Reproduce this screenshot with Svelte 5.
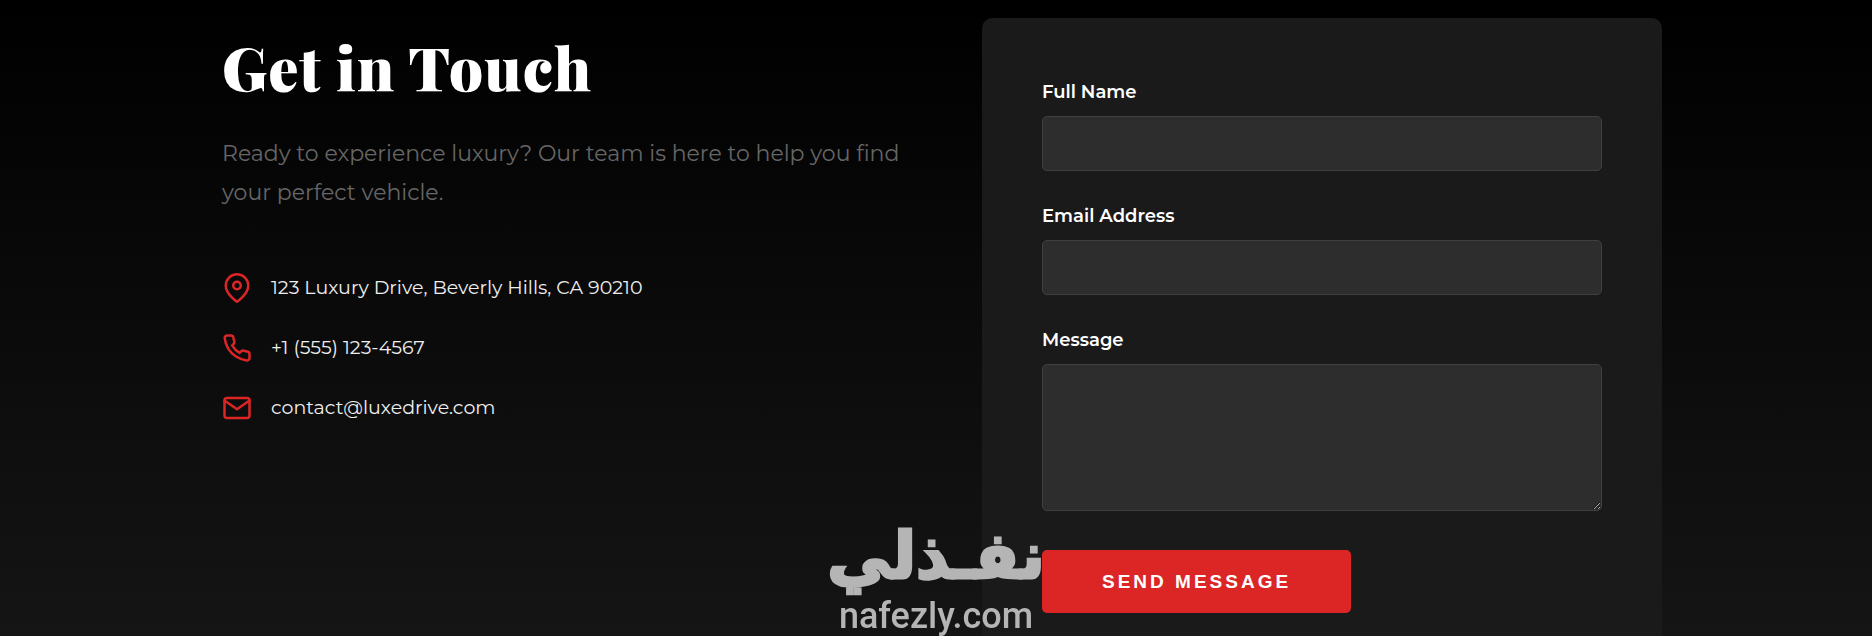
<script>
    let name = $state("");
    let email = $state("");
    let message = $state("");

    function send(ev) {
        ev.preventDefault();
        name = "";
        email = "";
        message = "";
    }
</script>

<section class="contact">
    <div class="container">
        <div class="info">
            <h2>Get in Touch</h2>
            <p class="lead">Ready to experience luxury? Our team is here to help you find your perfect vehicle.</p>
            <ul>
                <li>
                    <svg viewBox="0 0 24 24" aria-hidden="true">
                        <path d="M21 10c0 7-9 13-9 13s-9-6-9-13a9 9 0 0 1 18 0z" />
                        <circle cx="12" cy="10" r="3" />
                    </svg>
                    <span>123 Luxury Drive, Beverly Hills, CA 90210</span>
                </li>
                <li>
                    <svg viewBox="0 0 24 24" aria-hidden="true">
                        <path
                            d="M22 16.92v3a2 2 0 0 1-2.18 2 19.79 19.79 0 0 1-8.63-3.07 19.5 19.5 0 0 1-6-6 19.79 19.79 0 0 1-3.07-8.67A2 2 0 0 1 4.11 2h3a2 2 0 0 1 2 1.72 12.84 12.84 0 0 0 .7 2.81 2 2 0 0 1-.45 2.11L8.09 9.91a16 16 0 0 0 6 6l1.27-1.27a2 2 0 0 1 2.11-.45 12.84 12.84 0 0 0 2.81.7A2 2 0 0 1 22 16.92z"
                        />
                    </svg>
                    <span>+1 (555) 123-4567</span>
                </li>
                <li>
                    <svg viewBox="0 0 24 24" aria-hidden="true">
                        <path d="M4 4h16c1.1 0 2 .9 2 2v12c0 1.1-.9 2-2 2H4c-1.1 0-2-.9-2-2V6c0-1.1.9-2 2-2z" />
                        <polyline points="22,6 12,13 2,6" />
                    </svg>
                    <span>contact@luxedrive.com</span>
                </li>
            </ul>
        </div>

        <form onsubmit={send}>
            <div class="field">
                <label for="name">Full Name</label>
                <input id="name" type="text" bind:value={name} />
            </div>
            <div class="field">
                <label for="email">Email Address</label>
                <input id="email" type="email" bind:value={email} />
            </div>
            <div class="field">
                <label for="message">Message</label>
                <textarea id="message" bind:value={message}></textarea>
            </div>
            <button type="submit">Send Message</button>
        </form>
    </div>
</section>

<div class="watermark">
    <span class="watermark-ar" lang="ar" dir="rtl">نفـذلي</span>
    <span class="watermark-en">nafezly.com</span>
</div>

<style>
    :global(body) {
        margin: 0;
        background: #1a1a1a;
    }
    .contact {
        box-sizing: border-box;
        min-height: 100vh;
        padding: 18px 0 120px 12px;
        background: linear-gradient(#000, #1a1a1a);
        color: #fff;
        font-family: Montserrat, Inter, sans-serif;
    }
    .container {
        display: grid;
        grid-template-columns: 1fr 1fr;
        gap: 80px;
        max-width: 1440px;
        margin: 0 auto;
    }
    h2 {
        margin: 8px 0 28px;
        font-family: "Playfair Display", "Liberation Serif", serif;
        font-size: 60px;
        font-weight: 900;
        line-height: 80px;
        letter-spacing: 1px;
    }
    .lead {
        margin: 0 0 60px;
        color: #666;
        font-size: 22px;
        font-weight: 400;
        line-height: 39px;
    }
    ul {
        display: flex;
        flex-direction: column;
        gap: 28px;
        margin: 0;
        padding: 0;
        list-style: none;
    }
    li {
        display: flex;
        align-items: center;
        gap: 19px;
        color: #eee;
        font-size: 19px;
        line-height: 32px;
    }
    svg {
        flex: none;
        width: 30px;
        height: 30px;
        fill: none;
        stroke: #dc2626;
        stroke-width: 2;
        stroke-linecap: round;
        stroke-linejoin: round;
    }
    form {
        padding: 60px;
        border-radius: 10px;
        background: #1a1a1a;
    }
    .field {
        margin-bottom: 31px;
    }
    label {
        display: block;
        margin-bottom: 10px;
        font-size: 18px;
        font-weight: 600;
        line-height: 28px;
    }
    input,
    textarea {
        display: block;
        box-sizing: border-box;
        width: 100%;
        height: 55px;
        padding: 16px;
        border: 1px solid #404040;
        border-radius: 5px;
        background: #2d2d2d;
        color: #fff;
        font-family: inherit;
        font-size: 19px;
    }
    textarea {
        height: 147px;
        resize: vertical;
    }
    input:focus,
    textarea:focus {
        border-color: #dc2626;
        outline: none;
    }
    button {
        margin-top: 8px;
        padding: 20px 60px;
        border: none;
        border-radius: 5px;
        background: #dc2626;
        color: #fff;
        font-family: "Liberation Sans", Arial, sans-serif;
        font-size: 19px;
        font-weight: 700;
        line-height: 23px;
        letter-spacing: 3px;
        text-transform: uppercase;
        cursor: pointer;
    }
    .watermark {
        position: fixed;
        bottom: 0;
        left: 50%;
        display: flex;
        flex-direction: column;
        align-items: center;
        color: #b5b5b5;
        pointer-events: none;
        transform: translateX(-50%);
    }
    .watermark-ar {
        font-family: "DejaVu Sans", sans-serif;
        font-size: 64px;
        font-weight: 700;
        line-height: 80px;
        -webkit-text-stroke: 3px #b5b5b5;
    }
    .watermark-en {
        font-family: Roboto, sans-serif;
        font-size: 36px;
        font-weight: 500;
        line-height: 40px;
    }
</style>
